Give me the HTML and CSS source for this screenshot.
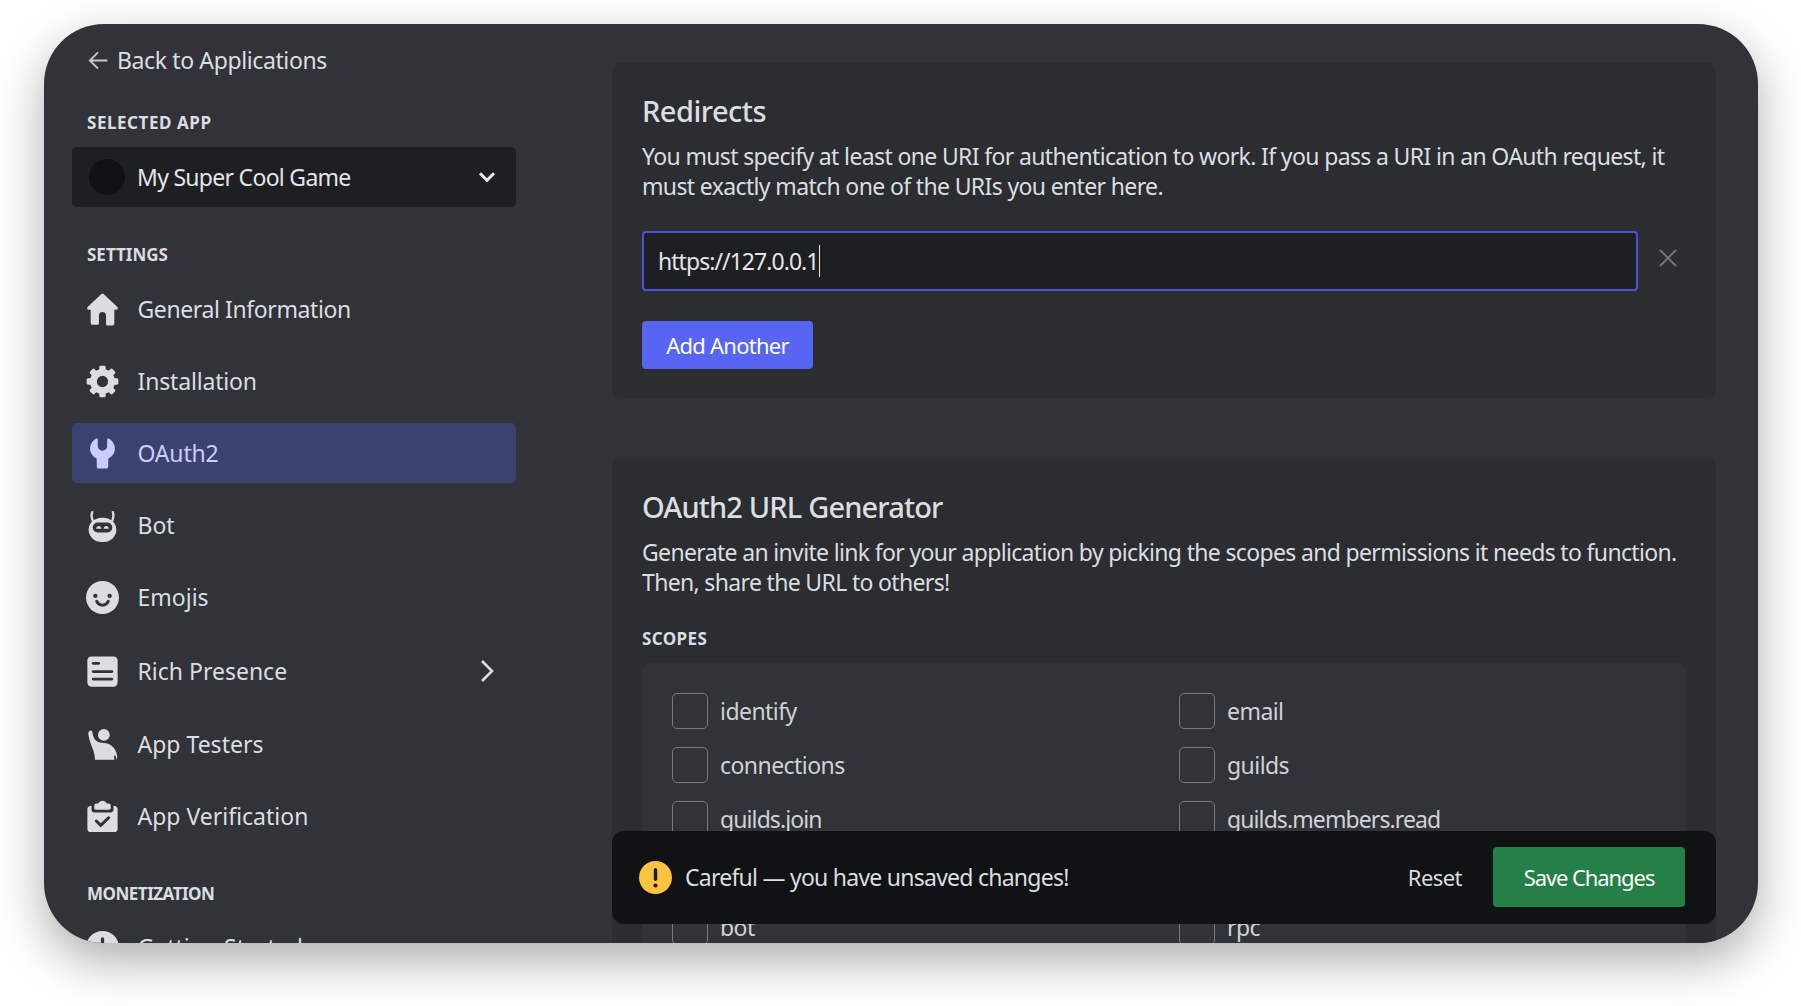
FILE: index.html
```html
<!DOCTYPE html>
<html lang="en">
<head>
<meta charset="utf-8">
<title>OAuth2 - My Super Cool Game</title>
<link rel="stylesheet" href="styles.css">
</head>
<body>
<div class="frame">
  <aside class="sidebar">
    <a class="back">
      <svg class="back-arrow" viewBox="0 0 20 20"><path d="M18.5 10H2M9.5 2.200 1.800 10l7.700 7.800"/></svg>
      <span>Back to Applications</span>
    </a>
    <div class="heading heading-app">SELECTED APP</div>
    <div class="select">
      <span class="avatar"></span>
      <span class="select-name">My Super Cool Game</span>
      <svg class="select-chev" viewBox="0 0 18 12"><path d="M2 2.200 9 9.400l7-7.200"/></svg>
    </div>
    <div class="heading heading-settings">SETTINGS</div>
    <nav class="nav">
      <a class="item item-general">
        <svg class="icon" viewBox="0 0 24 24"><path fill-rule="evenodd" d="M12 .5c-.4 0-.7.1-1 .4L1.200 10.200c-.8.7-.3 2 .8 2H3.400v9.400c0 .9.7 1.500 1.500 1.500H8.500c.5 0 .9-.4.9-.9V16.500a2.600 2.600 0 0 1 5.200 0V22.700c0 .5.4.9.9.9h3.600c.8 0 1.500-.6 1.500-1.500V12.200H22c1.100 0 1.600-1.300.8-2L13 .9c-.3-.3-.6-.4-1-.4z"/></svg>
        <span>General Information</span>
      </a>
      <a class="item item-tight">
        <svg class="icon" viewBox="0 0 24 24"><circle class="gear-ring" cx="12" cy="12" r="6.600"/><g><rect x="9.700" y=".5" width="4.600" height="5" rx="1"/><rect x="9.700" y=".5" width="4.600" height="5" rx="1" transform="rotate(45 12 12)"/><rect x="9.700" y=".5" width="4.600" height="5" rx="1" transform="rotate(90 12 12)"/><rect x="9.700" y=".5" width="4.600" height="5" rx="1" transform="rotate(135 12 12)"/><rect x="9.700" y=".5" width="4.600" height="5" rx="1" transform="rotate(180 12 12)"/><rect x="9.700" y=".5" width="4.600" height="5" rx="1" transform="rotate(225 12 12)"/><rect x="9.700" y=".5" width="4.600" height="5" rx="1" transform="rotate(270 12 12)"/><rect x="9.700" y=".5" width="4.600" height="5" rx="1" transform="rotate(315 12 12)"/></g></svg>
        <span>Installation</span>
      </a>
      <a class="item item-tight active">
        <svg class="icon" viewBox="0 0 24 24"><path d="M7.300 1.200C4.600 2.600 3 5.500 3 8.600c0 3.200 1.900 5.800 4.800 7.100v5.700c0 .9.700 1.500 1.500 1.500h5.400c.8 0 1.500-.6 1.500-1.500v-5.700c2.900-1.300 4.800-3.900 4.800-7.100 0-3.100-1.600-6-4.300-7.400-.6-.3-1.300.1-1.300.8v4.600c0 2-1.500 3.400-3.400 3.400s-3.400-1.400-3.400-3.400V2c0-.7-.7-1.100-1.300-.8z"/></svg>
        <span>OAuth2</span>
      </a>
      <a class="item">
        <svg class="icon" viewBox="0 0 24 24"><path class="ear" d="M4.500 2.300C3.700 4.800 4 7.300 5.600 9.800M19.500 2.300c.8 2.500.5 5-1.100 7.500"/><rect x="1.900" y="6.300" width="20.200" height="17.700" rx="9.500"/><rect class="cut" x="4.900" y="9.800" width="14.200" height="7.200" rx="3.600"/><path class="eye" d="M7.400 14.300c.2-1.200 1-1.900 1.900-1.900s1.700.7 1.900 1.900zM12.800 14.300c.2-1.200 1-1.900 1.900-1.900s1.700.7 1.900 1.900z"/></svg>
        <span>Bot</span>
      </a>
      <a class="item">
        <svg class="icon" viewBox="0 0 24 24"><circle cx="12" cy="12" r="12"/><circle class="cut" cx="6.800" cy="10.800" r="1.600"/><circle class="cut" cx="17.200" cy="10.800" r="1.600"/><path class="cut-line" d="M7.800 14.800c1 1.900 2.500 2.800 4.200 2.800s3.200-.9 4.200-2.800"/></svg>
        <span>Emojis</span>
      </a>
      <a class="item item-rich">
        <svg class="icon" viewBox="0 0 24 24"><rect x="1" y="1" width="22" height="22" rx="3"/><rect class="cut" x="4.200" y="5" width="6" height="2" rx="1"/><rect class="cut" x="4.200" y="11" width="15.600" height="2" rx="1"/><rect class="cut" x="4.200" y="16.500" width="15.600" height="2" rx="1"/></svg>
        <span>Rich Presence</span>
        <svg class="item-chev" viewBox="0 0 14 24"><path d="M2 2l10 10L2 22"/></svg>
      </a>
      <a class="item item-wide">
        <svg class="icon" viewBox="0 0 24 24"><circle cx="13" cy="5" r="4.300"/><path d="M2.500 2.200c.8-.9 2-.3 2.100.7.200 1.700.8 4.200 2.200 5.800 1.300 1.300 3.400 2.100 6.200 2.200 4.800.200 8.800 3.500 9.600 9.200.1.800 0 2.600-.3 2.900-.3-1.600-.9-3.100-1.300-3.100-.6 0-.6 1.300-.4 3.100H6.500c0-2.800-.6-5.300-1.500-7.600C3.300 11.300 1.800 7 1.700 4c0-.7.2-1.300.8-1.800z"/></svg>
        <span>App Testers</span>
      </a>
      <a class="item">
        <svg class="icon" viewBox="0 0 24 24"><path d="M12 .6c-1.300 0-2.500.7-3 2H7.500C6.700 2.600 6 3.300 6 4.100V5.800c0 .7.600 1.200 1.200 1.200h9.600c.6 0 1.200-.5 1.200-1.200V4.100c0-.8-.7-1.500-1.500-1.500H15c-.5-1.300-1.700-2-3-2z"/><path d="M1 6.500C1 5.300 2.200 4.300 4 4.200V7c0 1.100.9 2 2 2h12c1.100 0 2-.9 2-2V4.200c1.800.1 3 1.100 3 2.300V21c0 1.300-1 2.300-2.300 2.300H3.300C2 23.300 1 22.300 1 21z"/><path class="cut-line" d="M7.500 15.300l3.200 3.200 5.800-5.600"/></svg>
        <span>App Verification</span>
      </a>
    </nav>
    <div class="heading heading-money">MONETIZATION</div>
    <a class="item item-clipped">
      <svg class="icon" viewBox="0 0 24 24"><circle cx="12" cy="12" r="12"/><rect class="cut" x="10.800" y="4.500" width="2.400" height="9" rx="1.200"/></svg>
      <span>Getting Started</span>
    </a>
  </aside>

  <main class="main">
    <section class="panel panel-redirects">
      <h2 class="panel-title">Redirects</h2>
      <p class="panel-desc">You must specify at least one URI for authentication to work. If you pass a URI in an OAuth request, it must exactly match one of the URIs you enter here.</p>
      <div class="uri-row">
        <div class="uri-input"><span>https://127.0.0.1</span><i class="caret"></i></div>
        <svg class="uri-remove" viewBox="0 0 18 18"><path d="M1 1l16 16M17 1 1 17"/></svg>
      </div>
      <button class="btn-add">Add Another</button>
    </section>

    <section class="panel panel-generator">
      <h2 class="panel-title title-generator">OAuth2 URL Generator</h2>
      <p class="panel-desc desc-generator">Generate an invite link for your application by picking the scopes and permissions it needs to function. Then, share the URL to others!</p>
      <div class="scopes-label">SCOPES</div>
      <div class="scopes">
        <label class="scope"><i class="box"></i><span>identify</span></label>
        <label class="scope"><i class="box"></i><span>email</span></label>
        <label class="scope"><i class="box"></i><span>connections</span></label>
        <label class="scope"><i class="box"></i><span>guilds</span></label>
        <label class="scope scope-dotted"><i class="box"></i><span>guilds.join</span></label>
        <label class="scope scope-dotted"><i class="box"></i><span>guilds.members.read</span></label>
        <label class="scope"><i class="box"></i><span>gdm.join</span></label>
        <label class="scope"><i class="box"></i><span>messages.read</span></label>
        <label class="scope"><i class="box"></i><span>bot</span></label>
        <label class="scope"><i class="box"></i><span>rpc</span></label>
      </div>
    </section>

    <div class="savebar">
      <svg class="warn" viewBox="0 0 33 33"><circle cx="16.500" cy="16.500" r="16.500"/><rect x="14.800" y="7" width="3.400" height="13" rx="1.700"/><circle cx="16.500" cy="24.500" r="2.100"/></svg>
      <span class="savebar-text">Careful — you have unsaved changes!</span>
      <a class="reset">Reset</a>
      <button class="btn-save">Save Changes</button>
    </div>
  </main>
</div>
</body>
</html>
```
FILE: styles.css
```css
* { box-sizing: border-box; }
html, body { margin: 0; height: 100%; background: #fff; overflow: hidden; }
body {
  padding: 24px 43px 63px 44px;
  font-family: "Noto Sans", "Open Sans", sans-serif;
  font-size: 23px;
  letter-spacing: -0.55px;
  color: #dbdee1;
}
.frame {
  position: relative;
  display: flex;
  height: 919px;
  background: #313338;
  border-radius: 60px;
  overflow: hidden;
  box-shadow: 0 18px 48px rgba(0, 0, 0, .32);
}
.sidebar { flex: 0 0 568px; padding: 0 96px 0 28px; }
.back { display: flex; align-items: center; height: 36px; margin-top: 18px; padding-left: 16px; letter-spacing: -0.38px; }
.back-arrow { width: 21px; height: 21px; margin-right: 8px; fill: none; stroke: #c4c8ce; stroke-width: 1.800; }
.heading { font-size: 17px; font-weight: 700; line-height: 22px; padding-left: 15px; }
.heading-app { margin-top: 34px; letter-spacing: .55px; }
.heading-settings { margin-top: 37px; letter-spacing: 0; }
.heading-money { margin-top: 37px; letter-spacing: -0.5px; }
.select {
  display: flex; align-items: center; height: 60px; margin-top: 13px; padding: 0 20px 0 17px;
  background: #1e1f22; border-radius: 5px; color: #e4e5e8; letter-spacing: -0.71px;
}
.avatar { width: 36px; height: 36px; margin-right: 12px; background: #111214; border-radius: 50%; }
.select-name { flex: 1; }
.select-chev { width: 18px; height: 12px; fill: none; stroke: #e4e5e8; stroke-width: 3; }
.nav { margin-top: 13px; display: flex; flex-direction: column; gap: 12px; }
.item { display: flex; align-items: center; height: 60px; padding: 0 20px 0 14px; border-radius: 5px; letter-spacing: 0; }
.item span { flex: 1; margin-left: 18.500px; }
.item-general { letter-spacing: -0.4px; }
.item-tight { letter-spacing: -0.17px; }
.icon { flex: none; width: 33px; height: 33px; fill: #dbdee1; }
.icon .cut { fill: #313338; }
.icon .eye { fill: #dbdee1; }
.icon .ear { fill: none; stroke: #dbdee1; stroke-width: 1.700; stroke-linecap: round; }
.icon .cut-line { fill: none; stroke: #313338; stroke-width: 2.200; stroke-linecap: round; stroke-linejoin: round; }
.gear-ring { fill: none; stroke: #dbdee1; stroke-width: 5; }
.item.active { background: #3c4270; color: #c9cdfb; }
.item.active .icon { fill: #c9cdfb; }
.item-rich { margin-top: 2px; }
.item-wide { margin-top: 1px; }
.item-chev { flex: none; width: 14px; height: 24px; fill: none; stroke: #dbdee1; stroke-width: 2.600; margin-right: 2px; }
.item-clipped { margin-top: 20px; height: 44px; }

.main { position: relative; flex: 1; padding: 39px 42px 0 0; }
.panel { padding: 29px 30px 29px; background: #2b2d31; border-radius: 9px; }
.panel-generator { margin-top: 61px; padding-bottom: 30px; }
.panel-title { margin: 0; font-size: 29px; font-weight: 500; line-height: 38px; letter-spacing: -0.5px; color: #dbdee1; }
.title-generator { letter-spacing: -0.85px; }
.panel-desc { margin: 11px 0 0; line-height: 30px; letter-spacing: -0.64px; }
.desc-generator { margin-top: 11px; letter-spacing: -0.66px; }
.uri-row { display: flex; align-items: center; margin-top: 30px; }
.uri-input {
  flex: 0 0 996px; display: flex; align-items: center; height: 60px; padding: 0 0 0 14px;
  background: #1e1f22; border: 2px solid #4a55d6; border-radius: 4px; color: #e4e5e8; letter-spacing: -0.95px;
}
.caret { width: 1.500px; height: 32px; background: #e4e5e8; }
.uri-remove { width: 18px; height: 18px; margin: -6px 0 0 21px; fill: none; stroke: #76787d; stroke-width: 1.800; }
.btn-add {
  display: block; width: 171px; height: 48px; margin-top: 30px; padding: 0;
  background: #5865f2; border: 0; border-radius: 4px; color: #fff;
  font-family: inherit; font-size: 22px; letter-spacing: -0.75px;
}
.scopes-label { margin-top: 31px; font-size: 17px; font-weight: 700; line-height: 22px; letter-spacing: .4px; }
.scopes {
  display: grid; grid-template-columns: 507px 1fr; row-gap: 18px;
  margin-top: 13px; padding: 30px; background: #313338; border-radius: 9px;
}
.scope { display: flex; align-items: center; height: 36px; color: #d0d2d6; }
.scope-dotted { letter-spacing: -0.9px; }
.box { width: 36px; height: 36px; margin-right: 12px; border: 1.700px solid #777a80; border-radius: 5px; }
.savebar {
  position: absolute; left: 0; right: 42px; top: 807px; height: 93px;
  display: flex; align-items: center; padding: 0 31px 1px 27px;
  background: #111214; border-radius: 12px; letter-spacing: -0.75px;
}
.warn { width: 33px; height: 33px; margin-right: 13px; fill: #fbc33f; }
.warn rect, .warn circle + rect + circle { fill: #1b1b1b; }
.savebar-text { flex: 1; }
.reset { margin-right: 31px; font-size: 22px; letter-spacing: -0.55px; }
.btn-save {
  width: 192px; height: 60px; padding: 0; background: #248046; border: 0; border-radius: 4px;
  color: #fff; font-family: inherit; font-size: 22px; letter-spacing: -1.08px;
}
```
